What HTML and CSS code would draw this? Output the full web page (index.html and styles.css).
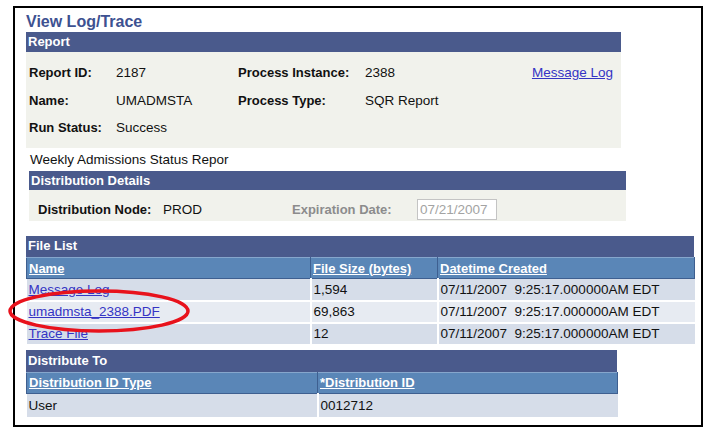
FILE: index.html
```html
<!DOCTYPE html>
<html>
<head>
<meta charset="utf-8">
<title>View Log/Trace</title>
<link rel="stylesheet" href="styles.css">
</head>
<body>
<div class="frame">
  <h1 class="title">View Log/Trace</h1>

  <section class="group report">
    <div class="group-head">Report</div>
    <div class="report-body">
      <span class="lbl">Report ID:</span><span>2187</span><span class="lbl">Process Instance:</span><span>2388</span><a class="report-link" href="#">Message Log</a>
      <span class="lbl">Name:</span><span>UMADMSTA</span><span class="lbl">Process Type:</span><span>SQR Report</span><span></span>
      <span class="lbl">Run Status:</span><span>Success</span><span></span><span></span><span></span>
    </div>
  </section>

  <div class="desc">Weekly Admissions Status Repor</div>

  <section class="group dist">
    <div class="group-head">Distribution Details</div>
    <div class="dist-body">
      <span class="lbl">Distribution Node:</span>
      <span>PROD</span>
      <span class="lbl muted">Expiration Date:</span>
      <span class="field">07/21/2007</span>
    </div>
  </section>

  <section class="grid filelist">
    <div class="group-head grid-head">File List</div>
    <table>
      <colgroup><col class="fl-c1"><col class="fl-c2"><col class="fl-c3"></colgroup>
      <thead>
        <tr><th><a href="#">Name</a></th><th><a href="#">File Size (bytes)</a></th><th><a href="#">Datetime Created</a></th></tr>
      </thead>
      <tbody>
        <tr class="odd"><td><a href="#">Message Log</a></td><td>1,594</td><td class="dt">07/11/2007  9:25:17.000000AM EDT</td></tr>
        <tr class="even"><td><a href="#">umadmsta_2388.PDF</a></td><td>69,863</td><td class="dt">07/11/2007  9:25:17.000000AM EDT</td></tr>
        <tr class="odd last"><td><a href="#">Trace File</a></td><td>12</td><td class="dt">07/11/2007  9:25:17.000000AM EDT</td></tr>
      </tbody>
    </table>
  </section>

  <section class="grid distto">
    <div class="group-head grid-head">Distribute To</div>
    <table>
      <colgroup><col class="dt-c1"><col class="dt-c2"></colgroup>
      <thead>
        <tr><th><a href="#">Distribution ID Type</a></th><th><a href="#">*Distribution ID</a></th></tr>
      </thead>
      <tbody>
        <tr class="odd data"><td>User</td><td>0012712</td></tr>
      </tbody>
    </table>
  </section>
</div>

<svg class="callout" width="190" height="50" viewBox="0 0 190 50" aria-hidden="true">
  <ellipse cx="94" cy="24" rx="89" ry="20" fill="none" stroke="#e8121c" stroke-width="3.5"/>
</svg>
</body>
</html>
```

FILE: styles.css
```css
* { box-sizing: border-box; }

html, body {
  margin: 0;
  padding: 0;
  background: #fff;
}

body {
  position: relative;
  width: 710px;
  height: 433px;
  overflow: hidden;
  font-family: "Liberation Sans", Arial, sans-serif;
  color: #111;
  font-size: 13.5px;
}

a {
  color: #3434c4;
  text-decoration: underline;
}

.frame {
  margin: 6px 0 0 13px;
  width: 690px;
  height: 421px;
  border: 2px solid #000;
  padding: 0 0 0 11px;
}

.title {
  margin: 4px 0 0;
  font-size: 16px;
  line-height: 20px;
  font-weight: bold;
  color: #3d5191;
}

.group-head {
  background: #4a5a8c;
  color: #fff;
  font-weight: bold;
  font-size: 13px;
  padding-left: 2px;
}

.lbl {
  font-weight: bold;
  font-size: 13px;
}

.muted { color: #8c8c8c; }

/* Report group */
.report { width: 595px; }

.report .group-head {
  height: 20px;
  line-height: 20px;
}

.report-body {
  background: #f1f2ec;
  height: 96px;
  padding: 7px 0 0 3px;
  display: grid;
  grid-template-columns: 87px 122px 127px 1fr auto;
  grid-auto-rows: 27.5px;
  align-items: center;
}

.report-link { padding-right: 8px; }

.desc {
  height: 23px;
  line-height: 23px;
  padding-left: 4px;
}

/* Distribution details */
.dist {
  width: 597px;
  margin-left: 3px;
}

.dist .group-head {
  height: 19px;
  line-height: 19px;
}

.dist-body {
  background: #f1f2ec;
  height: 31px;
  padding: 8px 0 0 9px;
  display: grid;
  grid-template-columns: 125px 129px 125px 80px;
  align-items: center;
}

.field {
  height: 21px;
  line-height: 19px;
  border: 1px solid #c4c4c4;
  background: #fff;
  color: #a3a3a3;
  padding-left: 2px;
}

/* Grids */
.grid .grid-head {
  padding-left: 2px;
}

.filelist {
  width: 668px;
  margin-top: 15px;
}

.filelist .grid-head {
  height: 21px;
  line-height: 20px;
}

.distto {
  width: 591px;
  margin-top: 6px;
}

.distto .grid-head {
  height: 22px;
  line-height: 22px;
}

.grid table {
  width: 100%;
  border-collapse: collapse;
  table-layout: fixed;
}

.fl-c1 { width: 284px; }
.fl-c2 { width: 127px; }
.fl-c3 { width: 257px; }
.dt-c1 { width: 291px; }
.dt-c2 { width: 300px; }

.grid th {
  height: 21px;
  padding: 0 0 0 2px;
  text-align: left;
  background: #5a86b7;
  border: 1px solid #3e5f90;
  border-top-color: #86a6cc;
  font-size: 13px;
  font-weight: bold;
}

.grid th a { color: #fff; }

.grid td {
  height: 22px;
  padding: 0 0 0 2px;
  border-right: 2px solid #fff;
  border-bottom: 2px solid #fff;
  white-space: nowrap;
}

.grid td:last-child { border-right: 0; }

.grid td.dt { white-space: pre; }

.grid tr.last td { height: 21px; border-bottom: 0; }
.grid tr.data td { height: 24px; border-bottom: 0; }

.odd td { background: #d6dde9; }
.even td { background: #e7ebf2; }

.callout {
  position: absolute;
  left: 5px;
  top: 287px;
}
```
